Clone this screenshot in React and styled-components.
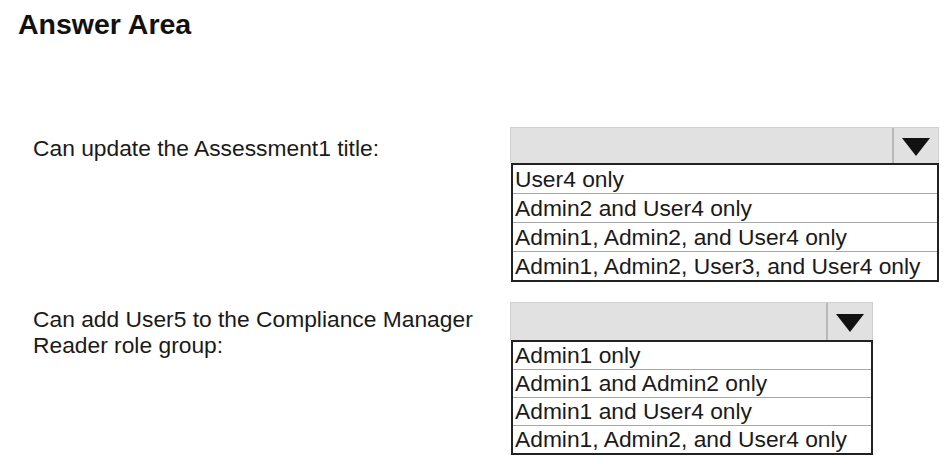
import React from 'react'
import styled, { createGlobalStyle } from 'styled-components'

const GlobalStyle = createGlobalStyle`
    body {
        margin: 0;
        background: #fff;
        font-family: "Liberation Sans", Arial, sans-serif;
        color: #1a1a1a;
    }
`

const questions = [
    {
        label: 'Can update the Assessment1 title:',
        top: 8,
        width: 429,
        header: 36,
        row: 28,
        options: [
            'User4 only',
            'Admin2 and User4 only',
            'Admin1, Admin2, and User4 only',
            'Admin1, Admin2, User3, and User4 only',
        ],
    },
    {
        label: 'Can add User5 to the Compliance Manager Reader role group:',
        top: 4,
        width: 363,
        header: 38,
        row: 27,
        options: [
            'Admin1 only',
            'Admin1 and Admin2 only',
            'Admin1 and User4 only',
            'Admin1, Admin2, and User4 only',
        ],
    },
]

const Arrow = () => (
    <svg width="28" height="18" viewBox="0 0 28 18">
        <polygon points="0,0 28,0 14,18" fill="#111" />
    </svg>
)

const App = () => {
    return (
        <Page>
            <GlobalStyle />
            <Title>Answer Area</Title>
            {questions.map((q, i) => (
                <Question key={i}>
                    <Label $top={q.top}>{q.label}</Label>
                    <Dropdown $width={q.width}>
                        <Header $height={q.header}>
                            <HeaderField />
                            <ArrowButton>
                                <Arrow />
                            </ArrowButton>
                        </Header>
                        <List>
                            {q.options.map(opt => (
                                <Option key={opt} $height={q.row}>{opt}</Option>
                            ))}
                        </List>
                    </Dropdown>
                </Question>
            ))}
        </Page>
    )
}

export default App

const Page = styled.div`
    width: 951px;
    height: 464px;
    padding-top: 10px;
    box-sizing: border-box;
    overflow: hidden;
`

const Title = styled.h1`
    margin: 0 0 89px 18px;
    font-size: 28.5px;
    line-height: 28px;
    font-weight: 700;
    color: #111;
`

const Question = styled.div`
    display: grid;
    grid-template-columns: 477px auto;
    padding-left: 33px;
    margin-bottom: 20px;
`

const Label = styled.div`
    padding-top: ${p => p.$top}px;
    max-width: 455px;
    font-size: 22.8px;
    line-height: 26px;
`

const Dropdown = styled.div`
    width: ${p => p.$width}px;
    display: flex;
    flex-direction: column;
`

const Header = styled.div`
    height: ${p => p.$height}px;
    display: flex;
    background: #e1e1e1;
    border: 1px solid #d0d0d0;
    border-bottom: none;
    box-sizing: border-box;
`

const HeaderField = styled.div`
    flex: 1;
`

const ArrowButton = styled.div`
    width: 46px;
    border-left: 2px solid #b9b9b9;
    display: flex;
    align-items: center;
    justify-content: center;
    padding-top: 3px;
    box-sizing: border-box;
`

const List = styled.div`
    margin-left: 1px;
    border: 2px solid #222;
    background: #fff;
`

const Option = styled.div`
    height: ${p => p.$height}px;
    line-height: ${p => p.$height}px;
    padding-left: 2px;
    font-size: 22.8px;
    white-space: nowrap;
    border-top: 1px solid #a8a8a8;

    &:first-child {
        border-top: none;
    }
`
